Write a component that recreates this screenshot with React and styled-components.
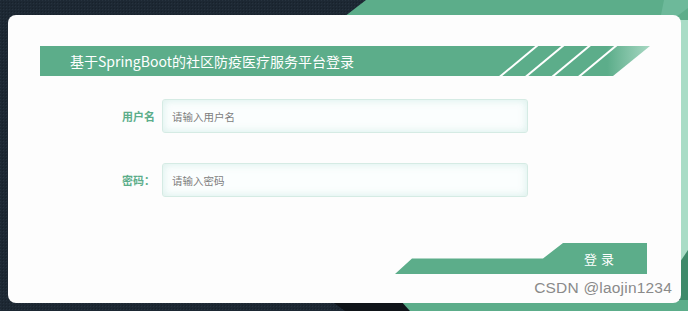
import React from "react";
import styled, { createGlobalStyle } from "styled-components";

const Global = createGlobalStyle`
  html, body { margin: 0; padding: 0; background: #1d2833; overflow: hidden; }
  * { box-sizing: border-box; }
`;

const GREEN = "#5cad8a";

const Page = styled.div`
  position: relative;
  width: 688px;
  height: 311px;
  padding: 15px 7px 8px 8px;
  background: #1d2833;
  font-family: "Noto Sans CJK SC", "Noto Sans", sans-serif;
`;

const Backdrop = styled.svg`
  position: absolute;
  left: 0;
  top: 0;
  width: 688px;
  height: 311px;
`;

const Card = styled.div`
  position: relative;
  width: 673px;
  height: 288px;
  border-radius: 8px;
  background: #fdfdfd;
  padding: 31px 31px 0 32px;
`;

const TitleBar = styled.div`
  position: relative;
  width: 610px;
  height: 30px;
  display: flex;
  align-items: center;
  padding-left: 30px;
`;

const TitleShape = styled.svg`
  position: absolute;
  left: 0;
  top: 0;
  width: 610px;
  height: 30px;
`;

const TitleText = styled.span`
  position: relative;
  color: #ffffff;
  font-size: 14px;
  line-height: 30px;
`;

const Form = styled.div`
  display: flex;
  flex-direction: column;
  gap: 30px;
  margin-top: 23px;
`;

const Row = styled.div`
  display: flex;
  align-items: center;
  gap: 7px;
`;

const Label = styled.label`
  width: 115px;
  text-align: right;
  color: ${GREEN};
  font-size: 11px;
  font-weight: 700;
`;

const Input = styled.input`
  width: 366px;
  height: 34px;
  border: 1px solid #d5ebe4;
  border-radius: 3px;
  background: #fbfefe;
  box-shadow: inset 0 0 8px rgba(170, 220, 208, 0.45);
  padding: 0 9px;
  font-family: "Noto Sans CJK SC", sans-serif;
  font-size: 10.5px;
  color: #333;
  outline: none;
  &::placeholder { color: #7d7d7d; }
`;

const ButtonRow = styled.div`
  display: flex;
  justify-content: flex-end;
  margin-top: 46px;
  padding-right: 3px;
`;

const LoginButton = styled.button`
  width: 252px;
  height: 31px;
  border: none;
  background: ${GREEN};
  color: #fff;
  font-family: "Noto Sans CJK SC", sans-serif;
  font-size: 13px;
  letter-spacing: 4px;
  display: flex;
  align-items: center;
  justify-content: flex-end;
  padding: 0 29px 0 0;
  clip-path: polygon(0px 31px, 17px 15.5px, 148px 15.5px, 168px 0px, 252px 0px, 252px 31px);
  cursor: pointer;
`;

const Watermark = styled.div`
  position: absolute;
  right: 9px;
  bottom: 6px;
  font-family: "Liberation Sans", Arial, sans-serif;
  font-size: 15.5px;
  color: #8a8a8a;
  letter-spacing: 0.2px;
`;

export default function App() {
  return (
    <>
      <Global />
      <Page>
        <Backdrop viewBox="0 0 688 311">
          <defs>
            <pattern id="grain" width="3" height="3" patternUnits="userSpaceOnUse">
              <rect width="3" height="3" fill="#1d2833" />
              <rect width="1" height="1" fill="#26323e" />
              <rect x="2" y="2" width="1" height="1" fill="#17212b" />
            </pattern>
          </defs>
          <rect width="688" height="311" fill="url(#grain)" />
          <polygon points="366,0 688,0 688,20 340,20" fill="#5cad8a" />
          <polygon points="664,0 688,0 688,8 672,20 660,20" fill="#6db99a" />
          <rect x="680" y="20" width="8" height="250" fill="#a9dcc6" />
          <polygon points="680,262 688,250 688,311 680,311" fill="#3e8a6a" />
          <polygon points="330,300 400,300 410,311 345,311" fill="#0f1419" />
          <polygon points="400,300 688,300 688,311 410,311" fill="#5cad8a" />
        </Backdrop>
        <Card>
          <TitleBar>
            <TitleShape viewBox="0 0 610 30">
              <defs>
                <linearGradient id="tg" x1="0" y1="0" x2="610" y2="0" gradientUnits="userSpaceOnUse">
                  <stop offset="0" stopColor="#5cad8a" />
                  <stop offset="0.93" stopColor="#5cad8a" />
                  <stop offset="1" stopColor="#a8d8c3" />
                </linearGradient>
              </defs>
              <polygon points="0,0 610,0 573,30 0,30" fill="url(#tg)" />
              {[497, 523, 549.5, 576].map((x) => (
                <line key={x} x1={x + 1} y1={-1} x2={x - 37.5} y2={31} stroke="#ffffff" strokeWidth="2" />
              ))}
            </TitleShape>
            <TitleText>基于SpringBoot的社区防疫医疗服务平台登录</TitleText>
          </TitleBar>
          <Form>
            <Row>
              <Label>用户名</Label>
              <Input placeholder="请输入用户名" />
            </Row>
            <Row>
              <Label>密码：</Label>
              <Input type="password" placeholder="请输入密码" />
            </Row>
          </Form>
          <ButtonRow>
            <LoginButton>登录</LoginButton>
          </ButtonRow>
          <Watermark>CSDN @laojin1234</Watermark>
        </Card>
      </Page>
    </>
  );
}
